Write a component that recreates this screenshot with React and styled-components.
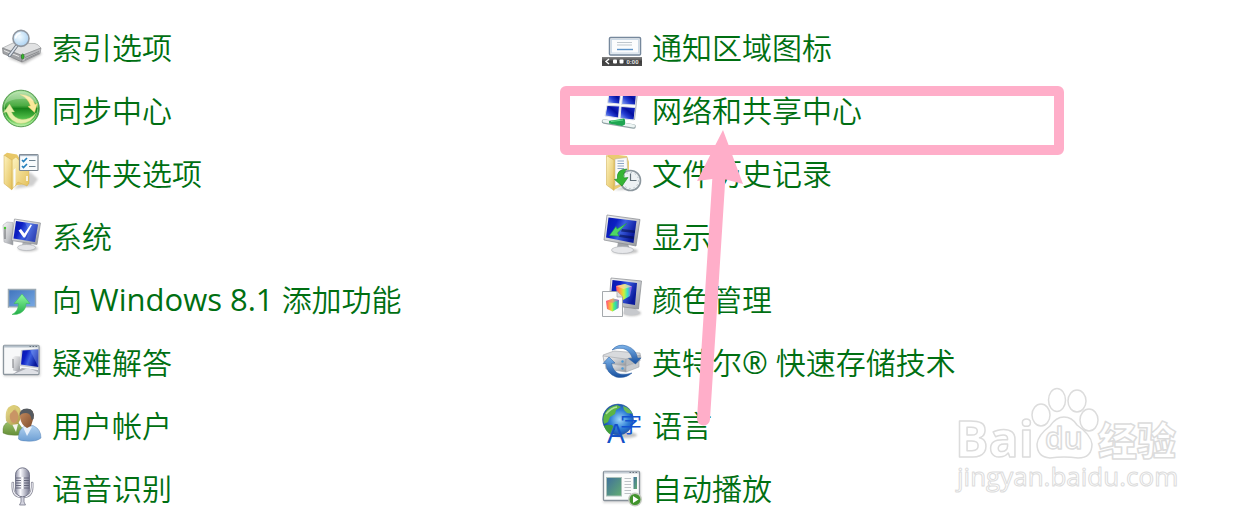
import styled, { createGlobalStyle } from 'styled-components';

const GlobalStyle = createGlobalStyle`
  * {
    box-sizing: border-box;
  }

  body {
    margin: 0;
    background-color: #fff;
    font-family: 'Open Sans', 'Noto Sans CJK SC', sans-serif;
  }
`;

const Page = styled.main`
  position: relative;
  padding-top: 16px;
  overflow: hidden;
`;

const ItemGrid = styled.ul`
  display: grid;
  grid-template-columns: repeat(auto-fill, 600px);
  margin: 0;
  padding: 0;
  list-style: none;
`;

const Item = styled.li`
  display: flex;
  align-items: center;
  height: 63px;
`;

const ItemLink = styled.a`
  display: flex;
  align-items: center;
  gap: 10px;
  font-size: 30px;
  line-height: 40px;
  color: #006f12;
  text-decoration: none;
  white-space: nowrap;

  &:hover {
    text-decoration: underline;
  }
`;

const Label = styled.span`
  padding-bottom: 3px;
  font-family: 'Noto Sans CJK SC', sans-serif;
  font-weight: 350;
`;

const Latin = styled.span`
  font-family: 'Open Sans', sans-serif;
  font-size: 31px;
  font-weight: 400;
`;

const IconBox = styled.svg`
  flex: none;
  display: block;
  width: 42px;
  height: 43px;
  overflow: visible;
`;

/* marks drawn over the list */
const Highlight = styled.div`
  position: absolute;
  top: 86px;
  left: 560px;
  width: 504px;
  height: 69px;
  pointer-events: none;
  border-radius: 6px;
  border: 10px solid #ffaec9;
`;

const Arrow = styled.svg`
  position: absolute;
  top: 130px;
  left: 690px;
  width: 60px;
  height: 300px;
  pointer-events: none;
`;

const Watermark = styled.svg`
  position: absolute;
  top: 380px;
  left: 940px;
  width: 260px;
  height: 130px;
  pointer-events: none;
`;

function Defs() {
  return (
    <svg width='0' height='0' style={{ display: 'block' }} aria-hidden='true'>
      <defs>
        <linearGradient id='silver' x1='0' y1='0' x2='1' y2='1'>
          <stop offset='0' stopColor='#f7f7f8' />
          <stop offset='0.6' stopColor='#c3c5c9' />
          <stop offset='1' stopColor='#8f9297' />
        </linearGradient>
        <linearGradient id='screen' x1='0' y1='0' x2='1' y2='0.4'>
          <stop offset='0' stopColor='#0818a8' />
          <stop offset='0.35' stopColor='#0c1fc4' />
          <stop offset='0.6' stopColor='#3c5fe0' />
          <stop offset='1' stopColor='#0a1a9c' />
        </linearGradient>
        <linearGradient id='panel' x1='0' y1='1' x2='1' y2='0'>
          <stop offset='0' stopColor='#9db9f5' />
          <stop offset='0.35' stopColor='#2740d4' />
          <stop offset='0.6' stopColor='#0410a0' />
          <stop offset='1' stopColor='#1b2fd0' />
        </linearGradient>
        <linearGradient id='folder' x1='0' y1='0' x2='1' y2='1'>
          <stop offset='0' stopColor='#fdf3c0' />
          <stop offset='1' stopColor='#e3bf58' />
        </linearGradient>
        <linearGradient id='green' x1='0' y1='0' x2='0' y2='1'>
          <stop offset='0' stopColor='#a5dc9a' />
          <stop offset='0.42' stopColor='#4bab42' />
          <stop offset='0.5' stopColor='#17831a' />
          <stop offset='0.75' stopColor='#4cb944' />
          <stop offset='1' stopColor='#b6f09c' />
        </linearGradient>
        <linearGradient id='leaf' x1='0' y1='0' x2='0' y2='1'>
          <stop offset='0' stopColor='#8dfaa0' />
          <stop offset='1' stopColor='#23ad48' />
        </linearGradient>
        <linearGradient id='sky' x1='0' y1='0' x2='1' y2='1'>
          <stop offset='0' stopColor='#3f74bd' />
          <stop offset='1' stopColor='#79a9e4' />
        </linearGradient>
        <linearGradient id='teal' x1='0' y1='0' x2='1' y2='1'>
          <stop offset='0' stopColor='#3f6f9c' />
          <stop offset='1' stopColor='#63ad72' />
        </linearGradient>
        <linearGradient id='rainbow' x1='0' y1='0' x2='1' y2='0'>
          <stop offset='0' stopColor='#ff4a7a' />
          <stop offset='0.3' stopColor='#ffb13d' />
          <stop offset='0.5' stopColor='#c8f53a' />
          <stop offset='0.72' stopColor='#35e0c8' />
          <stop offset='1' stopColor='#a63df0' />
        </linearGradient>
        <radialGradient id='globe' cx='0.55' cy='0.5' r='0.6'>
          <stop offset='0' stopColor='#9fd8fb' />
          <stop offset='0.5' stopColor='#2f7fd6' />
          <stop offset='1' stopColor='#123e9a' />
        </radialGradient>
        <radialGradient id='lens' cx='0.4' cy='0.4' r='0.7'>
          <stop offset='0' stopColor='#f2fbff' />
          <stop offset='1' stopColor='#a4cdf0' />
        </radialGradient>
        <linearGradient id='blond' x1='0' y1='0' x2='1' y2='1'>
          <stop offset='0' stopColor='#ece29a' />
          <stop offset='1' stopColor='#aa9440' />
        </linearGradient>
        <linearGradient id='skin' x1='0' y1='0' x2='1' y2='1'>
          <stop offset='0' stopColor='#c98f62' />
          <stop offset='1' stopColor='#7c4a2a' />
        </linearGradient>
        <linearGradient id='shirt' x1='0' y1='0' x2='0' y2='1'>
          <stop offset='0' stopColor='#b3d2f0' />
          <stop offset='1' stopColor='#6d9fd4' />
        </linearGradient>
        <linearGradient id='olive' x1='0' y1='0' x2='0' y2='1'>
          <stop offset='0' stopColor='#9dc16a' />
          <stop offset='1' stopColor='#648e38' />
        </linearGradient>
        <linearGradient id='mic' x1='0' y1='0' x2='1' y2='0'>
          <stop offset='0' stopColor='#8b8da2' />
          <stop offset='0.35' stopColor='#fbfbff' />
          <stop offset='1' stopColor='#777990' />
        </linearGradient>
        <linearGradient id='bar' x1='0' y1='0' x2='0' y2='1'>
          <stop offset='0' stopColor='#858585' />
          <stop offset='0.5' stopColor='#3d3d3d' />
          <stop offset='1' stopColor='#4c4c4c' />
        </linearGradient>
        <linearGradient id='swoosh' x1='0' y1='0' x2='0' y2='1'>
          <stop offset='0' stopColor='#7db4ea' />
          <stop offset='1' stopColor='#174f9e' />
        </linearGradient>
        <filter id='soft' x='-30%' y='-50%' width='160%' height='200%'>
          <feGaussianBlur stdDeviation='1.2' />
        </filter>
      </defs>
    </svg>
  );
}

function IndexIcon() {
  return (
    <>
      <path d='M8 32L24 38L42 28L38 24Z' fill='#777' opacity='.45' filter='url(#soft)' />
      <path d='M2.500 22L13 17L35 17.500Q38 18 41 22L22 29.500Z' fill='#e1e2e3' stroke='#a4a6a8' strokeWidth='.7' />
      <path d='M2.500 22L22 29.500V36L3 27.500Z' fill='#a1a3a6' stroke='#75777a' strokeWidth='.6' />
      <path d='M22 29.500L41 22L40 27.500L22 36Z' fill='#b9bbbd' stroke='#808284' strokeWidth='.6' />
      <path d='M25 31.500L39 25.500M25 33.500L39 27' stroke='#77797b' strokeWidth='.7' />
      <path d='M4 24.500L19 30.500' stroke='#e8e8e8' strokeWidth='1' />
      <ellipse cx='22.700' cy='30.500' rx='1.400' ry='2.600' fill='#35b82a' stroke='#1e641b' strokeWidth='.6' />
      <path d='M16.500 20L9.500 29.500' stroke='#6e7884' strokeWidth='3.400' strokeLinecap='round' />
      <path d='M16.500 20L9.500 29.500' stroke='#dce3eb' strokeWidth='1.600' strokeLinecap='round' />
      <circle cx='21' cy='12.400' r='8' fill='url(#lens)' stroke='#9097a0' strokeWidth='1.600' />
      <path d='M15.500 12.500Q16 8 20.500 7.200' fill='none' stroke='#fff' strokeWidth='1.700' />
    </>
  );
}

function SyncIcon() {
  return (
    <>
      <circle cx='21' cy='19.500' r='18.300' fill='url(#green)' stroke='#5c9e58' strokeWidth='1' />
      <circle cx='21' cy='19.500' r='16.800' fill='none' stroke='#c4efb5' strokeWidth='.8' opacity='.7' />
      <path d='M20 5.500Q32 5.500 35 15.500L37.500 14.500L34.500 23.500L28 17.500L30.500 16.800Q28 9 20 5.500Z' fill='#fbe89a' stroke='#e6c95e' strokeWidth='.4' />
      <path d='M9.500 15L3.500 23.500L6.500 23Q11 34 21 34.500Q32 34 36 24Q30 31 22 30.500Q14 29.500 11.500 23L14.500 23Z' fill='#e7efaa' stroke='#bccf72' strokeWidth='.4' />
      <path d='M5 15Q9 3 21 3Q33 3 37 15Q29 9 20 10Q11 10 5 15Z' fill='#fff' opacity='.25' />
    </>
  );
}

function FolderOptionsIcon() {
  return (
    <>
      <path d='M14 37L33 34L38 27L30 20Z' fill='#888' opacity='.4' filter='url(#soft)' />
      <path d='M4 3L7 .8L17 2.500L29 21V32L17 33L12 37Z' fill='#e8c766' />
      <path d='M12 8L16 5L29 19V31L27 34L18 30L12 37Z' fill='url(#folder)' stroke='#d0a947' strokeWidth='.4' />
      <path d='M4 3L12 8V38L4 31.500Z' fill='url(#folder)' stroke='#cda849' strokeWidth='.5' />
      <path d='M13.500 18L15.500 16V33L13.500 36Z' fill='#f8fbff' />
      <path d='M27 24V29' stroke='#fff' strokeWidth='1.500' />
      <rect x='19.500' y='2.500' width='18.500' height='16' rx='.8' fill='#f8fbfd' stroke='#7d8790' strokeWidth='1.200' />
      <path d='M20 3.500H38' stroke='#a9b6c3' strokeWidth='1.300' />
      <path d='M22 8L23.500 9.500L27 6M22 14L23.500 15.500L27 12' fill='none' stroke='#2380bd' strokeWidth='1.700' />
      <path d='M29 8.500H35.500M29 14.500H35.500' stroke='#6d8391' strokeWidth='1.200' />
    </>
  );
}

function SystemIcon() {
  return (
    <>
      <ellipse cx='28' cy='33.500' rx='10' ry='3' fill='#888' opacity='.5' filter='url(#soft)' />
      <path d='M3 10L7 7L13 7.500V30L4 27Z' fill='url(#silver)' stroke='#a2a5aa' strokeWidth='.5' />
      <path d='M5 12V24' stroke='#64676b' strokeWidth='1' />
      <circle cx='5' cy='13' r='1.200' fill='#42c52c' />
      <path d='M23 26L31 28L32 32L22 31Z' fill='#aeb1b6' />
      <ellipse cx='26.500' cy='32.500' rx='9' ry='3' fill='#e4e5e8' stroke='#a9acb1' strokeWidth='.6' />
      <path d='M14.500 4L40.500 8L37 29.500L11.500 25.500Z' fill='url(#silver)' stroke='#8f9297' strokeWidth='.7' />
      <path d='M16 6L38 9.500L35 27L13.500 23.500Z' fill='url(#screen)' />
      <path d='M25 7.500L38 9.500L35 27L25 25.400Q31 18 25 7.500Z' fill='#91b2ff' opacity='.3' />
      <path d='M18.500 15.500L21 14L24.500 18.500L30.500 9.500L32 10L25 22.500H23.500Z' fill='#fff' />
    </>
  );
}

function AddFeatureIcon() {
  return (
    <>
      <rect x='8.500' y='11.500' width='27' height='17.500' fill='url(#sky)' stroke='#9aa9b4' strokeWidth='1.500' />
      <path d='M9 29.500H36' stroke='#d0d5d8' strokeWidth='1.200' />
      <path d='M22 16L30 25.500H26Q26 32 20.500 35Q16.500 37 12 36.500Q18.500 33.500 18.500 25.500H14Z' fill='url(#leaf)' stroke='#38bd55' strokeWidth='.5' />
    </>
  );
}

function TroubleshootIcon() {
  return (
    <>
      <rect x='3.500' y='5' width='37' height='30.500' rx='1' fill='#999' opacity='.4' filter='url(#soft)' />
      <rect x='3.500' y='4.500' width='35.500' height='29' rx='1' fill='#f7f8f9' stroke='#8b959d' strokeWidth='1.300' />
      <path d='M4 5.500H38.500' stroke='#b6c1cb' strokeWidth='2' />
      <path d='M29.500 5.500H31M32.500 5.500H34M35.500 5.500H37' stroke='#68727c' strokeWidth='1' />
      <path d='M12 17L15 15L20 15.500V31L13 29.500Z' fill='url(#silver)' />
      <path d='M13 18V27' stroke='#65686c' strokeWidth='.8' />
      <path d='M13 33L22 27L38 29V33Z' fill='#a8abb2' />
      <path d='M14 33L28 27L38 31V33Z' fill='#dfe1e6' />
      <path d='M21 9L38.300 7.500V27.500L19.500 25Z' fill='#c8ccd2' />
      <path d='M22.500 9.500L38.300 8.500V26L21 23.500Z' fill='url(#screen)' />
      <path d='M30 9L38.300 8.500V26Z' fill='#9cbbff' opacity='.35' />
    </>
  );
}

function UsersIcon() {
  return (
    <>
      <path d='M3 29Q2 20 9 17.500L18 18.500L22 24L20 31Q9 32 3 29Z' fill='url(#olive)' stroke='#56782f' strokeWidth='.4' />
      <path d='M12 20L16 28L18 20Z' fill='#f4f4ec' />
      <path d='M6 17Q4 2 14 1Q23 2 20.500 15L18 20L11 21Z' fill='url(#blond)' />
      <ellipse cx='14' cy='12.500' rx='4.200' ry='6.500' fill='#c99565' />
      <path d='M8 11Q13 8 15 4Q18 8 19 12L20 5L14 1L8 4Z' fill='#dccd78' />
      <path d='M18.500 35Q18 25 25 22L33 21.500Q41 25 41 34Q36 38 26 37Q20 37 18.500 35Z' fill='url(#shirt)' stroke='#5a87b8' strokeWidth='.5' />
      <path d='M23 23L27 32L32 23L28 21Z' fill='#e9f1fb' />
      <path d='M20 13Q19 5 27 5Q35 5 33.500 14L31 22L27 24Q21 21 20 13Z' fill='url(#skin)' />
      <path d='M19.800 12Q19 4.500 27 4.500Q35.500 5 33.500 15L31.500 16Q31 9 26 9Q21 9 19.800 12Z' fill='#555a60' />
    </>
  );
}

function MicIcon() {
  return (
    <>
      <path d='M12.800 16V20Q13 30 22.500 30Q32 30 32.200 20V16' fill='none' stroke='#8b8c99' strokeWidth='2.600' strokeLinecap='round' />
      <path d='M12.800 16V20Q13 30 22.500 30Q32 30 32.200 20V16' fill='none' stroke='#eeeef5' strokeWidth='1.100' strokeLinecap='round' />
      <path d='M21 29H24V35L25.500 38H19.500L21 35Z' fill='#d4d4df' stroke='#77798a' strokeWidth='.8' />
      <rect x='15.500' y='.8' width='14' height='29' rx='7' fill='url(#mic)' stroke='#77798c' strokeWidth='1' />
      <path d='M16 11H21M24 11H29M16 13.500H21M24 13.500H29M16 16H21M24 16H29M16 18.500H21M24 18.500H29M16 21H21M24 21H29' stroke='#5f6175' strokeWidth='.9' />
      <path d='M22.500 10V22' stroke='#fff' strokeWidth='1.400' />
    </>
  );
}

function TrayIcon() {
  return (
    <>
      <rect x='9.500' y='11.500' width='31' height='17.500' rx='1' fill='#f3f6f9' stroke='#76889c' strokeWidth='1.500' />
      <rect x='11.500' y='13.500' width='27' height='13.500' fill='#fbfcfd' stroke='#cddae6' strokeWidth='1' />
      <path d='M17 16.500H32M17 19H32' stroke='#bfc7cd' strokeWidth='1' />
      <path d='M17 23.500H33' stroke='#5d94ca' strokeWidth='1.400' />
      <rect x='2' y='31' width='40' height='9' fill='url(#bar)' />
      <path d='M9 33L6 35.500L9 38' fill='none' stroke='#fff' strokeWidth='1.400' />
      <rect x='13' y='33.500' width='4' height='4' rx='1' fill='#fff' />
      <rect x='19.500' y='33.500' width='4' height='4' rx='1' fill='#fff' />
      <text x='26.500' y='38' fontSize='6' fontWeight='700' fontFamily='Liberation Sans, sans-serif' fill='#e8e8e8'>
        0:00
      </text>
    </>
  );
}

function NetworkIcon() {
  return (
    <>
      <g fill='url(#panel)' stroke='#e3e6ea' strokeWidth='1'>
        <path d='M9.500 1L21 1.500L19.500 15L7.500 14Z' />
        <path d='M23 2L36.500 3L35.500 16L21.500 15.500Z' />
        <path d='M7 16.500L19.500 17L18.500 29L5 27Z' />
        <path d='M21 17.500L35.500 18.500L34 31L20 29.500Z' />
      </g>
      <path d='M37 3L38 4L35 31L34 31Z' fill='#aeb2b8' />
      <path d='M4 32.500L33.500 37.500' stroke='#93a3a6' strokeWidth='4.600' strokeLinecap='round' />
      <path d='M4 32L33.500 37' stroke='#edf5f4' strokeWidth='3' strokeLinecap='round' />
      <path d='M9 32L24 29.500Q25.500 30 25 35.500L22 37L9 34.500Z' fill='#1fa552' />
      <path d='M11 32.500L23 31' stroke='#65dc8b' strokeWidth='1.200' fill='none' />
    </>
  );
}

function FileHistoryIcon() {
  return (
    <>
      <path d='M14 38L33 37L40 30Z' fill='#777' opacity='.5' filter='url(#soft)' />
      <path d='M6.500 4L10 2L27 4L29 10V30L14 38Z' fill='#e9cb72' />
      <path d='M15 7L27 5.500L28 30L15 34Z' fill='#fafafa' stroke='#b9b29a' strokeWidth='.5' />
      <path d='M17.500 9H24M17.500 11.500H24M17.500 14H24M17.500 16.500H24' stroke='#8da6c4' strokeWidth='1' />
      <path d='M6.500 3.500L14 8V38.500L6.500 33Z' fill='url(#folder)' stroke='#cda849' strokeWidth='.5' />
      <circle cx='30.500' cy='28.500' r='10' fill='#eef2f4' stroke='#8c979e' strokeWidth='1.600' />
      <circle cx='30.500' cy='28.500' r='8' fill='none' stroke='#9dacb5' strokeWidth='1' strokeDasharray='1 3.200' />
      <path d='M30.500 21.500V28.500H36.500' fill='none' stroke='#64727b' strokeWidth='1.200' />
      <path d='M27 17Q16 17 17.500 27L14.500 27.500L22 34L28 25.500L24 26Q22.500 21 27 17Z' fill='#36b534' stroke='#188420' strokeWidth='.6' />
    </>
  );
}

function DisplayIcon() {
  return (
    <>
      <ellipse cx='25' cy='36' rx='13' ry='3' fill='#888' opacity='.5' filter='url(#soft)' />
      <path d='M18 27L28 29L30 34L17 33Z' fill='#a2a5aa' />
      <ellipse cx='22.500' cy='35' rx='11' ry='3.500' fill='#e6e7ea' stroke='#aaadb2' strokeWidth='.6' />
      <path d='M7 0L40 4.500L36 31L4 25Z' fill='url(#silver)' stroke='#85888d' strokeWidth='.7' />
      <path d='M8.500 2.500L36.500 6L33.500 28L6 22.500Z' fill='url(#screen)' />
      <path d='M22 14L35 15.500L34.500 18L21 16.500ZM20 19.500L34 21.500L33.500 24L19 22Z' fill='#05104f' opacity='.6' />
      <path d='M26.500 8.500L17 14L16 11.500L9.500 20.500L19 21L17.500 18Z' fill='#4ed765' stroke='#229d3c' strokeWidth='.5' />
    </>
  );
}

function ColorIcon() {
  return (
    <>
      <ellipse cx='32' cy='35' rx='9' ry='3' fill='#777' opacity='.5' filter='url(#soft)' />
      <path d='M24 29L34 29L40 35Q33 39 24 36Z' fill='#c7c9cd' />
      <path d='M11 0L41.500 3L38.500 31L9 27Z' fill='url(#silver)' stroke='#85888d' strokeWidth='.7' />
      <path d='M12.500 2L37 5L35 27L10.500 23Z' fill='url(#screen)' />
      <path d='M16 8L25 6L32 8.500L30 18L23 22L17 18Z' fill='url(#rainbow)' />
      <path d='M16 8L25 6L32 8.500L23.500 11Z' fill='#ffd7b0' opacity='.65' />
      <path d='M2.500 13.500H17L22.500 19V38.500H2.500Z' fill='#fcfcfc' stroke='#9b9fa3' strokeWidth='.9' />
      <path d='M17 13.500V19H22.500' fill='#dedfe1' stroke='#9b9fa3' strokeWidth='.7' />
      <path d='M6 23L13 20.500L19 22L18.500 30L12.500 33.500L7 31Z' fill='url(#rainbow)' />
      <path d='M6 23L13 20.500L19 22L12.500 25Z' fill='#ff5a9a' opacity='.5' />
      <path d='M12.500 25L19 22L18.500 30L12.500 33.500Z' fill='#26e36d' opacity='.35' />
    </>
  );
}

function StorageIcon() {
  return (
    <>
      <g stroke='#a0a3a7' strokeWidth='.6'>
        <path d='M3 14L14 10L40 12L41 17L26 22L4 19Z' fill='#d8dadd' />
        <path d='M3 15L26 18V25L4 21Z' fill='url(#silver)' />
        <path d='M26 18L40 14V20L26 25Z' fill='#b6b9bd' />
        <path d='M5 22L26 25V31L6 28Z' fill='url(#silver)' />
        <path d='M26 25L39 21V26L26 31Z' fill='#c9cbce' />
      </g>
      <circle cx='22.500' cy='20.500' r='1.200' fill='#4b9bd8' />
      <circle cx='22.500' cy='27.500' r='1.200' fill='#4b9bd8' />
      <path d='M12 9Q18 2 27 5Q36 8 37.500 17L41 17L35.500 23L28.500 17.500L32.500 17.500Q29.500 9 23 7.500Q17 6.500 12 9Z' fill='url(#swoosh)' stroke='#285c9e' strokeWidth='.5' />
      <path d='M32 32Q25 38 16 36Q6 32 6 22.500L3 22.500L9 16L15 22L11.500 22.500Q13 31 20 33Q26 34 32 32Z' fill='url(#swoosh)' stroke='#285c9e' strokeWidth='.5' />
    </>
  );
}

function LanguageIcon() {
  return (
    <>
      <ellipse cx='26' cy='31' rx='11' ry='3' fill='#666' opacity='.4' filter='url(#soft)' />
      <circle cx='18' cy='15.500' r='15.500' fill='url(#globe)' stroke='#335f9d' strokeWidth='.5' />
      <path d='M5 9Q9 2 17 1L21 3L16 6L15 10L10 13L8 18L4 20Q2 14 5 9Z' fill='#5cb544' />
      <path d='M23 2Q30 4 32.500 10L27 9L24 6Z' fill='#68b957' />
      <path d='M6 21L12 21L15 25L11 31Q6 28 4 22Z' fill='#3f9d3c' />
      <path d='M6 10Q11 4 17 3' fill='none' stroke='#d4f7c4' strokeWidth='1.400' opacity='.7' />
      <text x='7' y='39' fontSize='27' fontFamily='Liberation Sans, sans-serif' fill='#1450c8'>
        A
      </text>
      <text x='20' y='28' fontSize='22' fontWeight='400' fontFamily='Noto Sans CJK SC, sans-serif' fill='#1353d1'>
        字
      </text>
    </>
  );
}

function AutoPlayIcon() {
  return (
    <>
      <rect x='3' y='5' width='38' height='31' rx='1' fill='#999' opacity='.35' filter='url(#soft)' />
      <rect x='3.500' y='4.500' width='36' height='29' rx='1' fill='#fafbfb' stroke='#87919a' strokeWidth='1.300' />
      <path d='M4 5.500H39' stroke='#c3ccd4' strokeWidth='2' />
      <path d='M29.500 5.500H31M32.500 5.500H34M35.500 5.500H37' stroke='#68727c' strokeWidth='1' />
      <rect x='6.500' y='10.500' width='15' height='18.500' fill='url(#teal)' stroke='#adc2bb' strokeWidth='1' />
      <path d='M24.500 11.500H31M24.500 14.500H31M24.500 17.500H31M24.500 20.500H31M24.500 23.500H31M24.500 26.500H31' stroke='#b7bcc0' strokeWidth='.9' />
      <rect x='33.500' y='10' width='3.500' height='12' fill='url(#teal)' />
      <circle cx='35' cy='32.500' r='6.200' fill='#41942c' stroke='#c3c9bf' strokeWidth='1.400' />
      <path d='M33 29L38.500 32.500L33 36Z' fill='#fff' />
    </>
  );
}

const items = [
  { label: '索引选项', icon: IndexIcon },
  { label: '通知区域图标', icon: TrayIcon },
  { label: '同步中心', icon: SyncIcon },
  { label: '网络和共享中心', icon: NetworkIcon },
  { label: '文件夹选项', icon: FolderOptionsIcon },
  { label: '文件历史记录', icon: FileHistoryIcon },
  { label: '系统', icon: SystemIcon },
  { label: '显示', icon: DisplayIcon },
  {
    label: (
      <>
        向<Latin> Windows 8.1 </Latin>添加功能
      </>
    ),
    icon: AddFeatureIcon,
  },
  { label: '颜色管理', icon: ColorIcon },
  { label: '疑难解答', icon: TroubleshootIcon },
  {
    label: (
      <>
        英特尔<Latin>® </Latin>快速存储技术
      </>
    ),
    icon: StorageIcon,
  },
  { label: '用户帐户', icon: UsersIcon },
  { label: '语言', icon: LanguageIcon },
  { label: '语音识别', icon: MicIcon },
  { label: '自动播放', icon: AutoPlayIcon },
];

function BaiduWatermark() {
  return (
    <Watermark viewBox='0 0 260 130'>
      <g fill='#fff' stroke='#dcdcdc' strokeWidth='1.500' strokeLinejoin='round'>
        <text x='15' y='77' fontSize='50' fontWeight='700' fontFamily='Open Sans, sans-serif'>
          Bai
        </text>
        <ellipse cx='101' cy='35' rx='9' ry='11' />
        <ellipse cx='117' cy='20' rx='8.500' ry='11.500' />
        <ellipse cx='137' cy='21' rx='9' ry='11' />
        <ellipse cx='149' cy='40' rx='9' ry='11' />
        <path d='M124 37Q132 37 137 45Q151 55 152 64Q152 78 138 78Q124 76 110 78Q97 77 97 64Q98 55 110 46Q116 37 124 37Z' />
        <text x='105' y='69' fontSize='30' fontWeight='600' fontFamily='Open Sans, sans-serif'>
          du
        </text>
        <text x='158' y='75' fontSize='39' fontWeight='900' fontFamily='Noto Sans CJK SC, sans-serif'>
          经验
        </text>
        <text x='17' y='106' fontSize='26' fontWeight='400' strokeWidth='1' fontFamily='Open Sans, sans-serif'>
          jingyan.baidu.com
        </text>
      </g>
    </Watermark>
  );
}

function App() {
  return (
    <Page>
      <GlobalStyle />
      <Defs />
      <ItemGrid>
        {items.map(({ label, icon: Icon }, index) => (
          <Item key={index}>
            <ItemLink href='#'>
              <IconBox viewBox='0 0 42 43' aria-hidden='true'>
                <Icon />
              </IconBox>
              <Label>{label}</Label>
            </ItemLink>
          </Item>
        ))}
      </ItemGrid>
      <BaiduWatermark />
      <Highlight />
      <Arrow viewBox='0 0 60 300' aria-hidden='true'>
        <path d='M29 46L13.500 289' stroke='#ffaec9' strokeWidth='13' strokeLinecap='round' />
        <path d='M33 0L53 54L30 48L7 51Z' fill='#ffaec9' />
      </Arrow>
    </Page>
  );
}

export default App;
